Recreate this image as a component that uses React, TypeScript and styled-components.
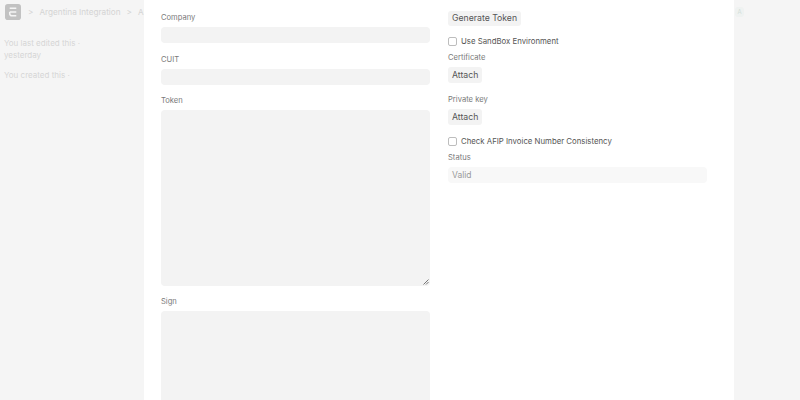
import styled, { createGlobalStyle } from 'styled-components'

const GlobalStyle = createGlobalStyle`
    html, body {
        margin: 0;
        padding: 0;
        height: 400px;
        overflow: hidden;
        background: #f5f5f5;
        font-family: Inter, "Liberation Sans", sans-serif;
    }
`

const App = () => {
    return (
        <Page>
            <GlobalStyle />
            <Backdrop>
                <TopBar>
                    <Logo>
                        <svg width="16" height="16" viewBox="0 0 17 17">
                            <rect width="17" height="17" rx="3" fill="#c2c2c2" />
                            <path d="M5 4.5h7M5 8.5h7M12 12.5H7.5Q5 12.5 5 10V8.5" fill="none" stroke="#f5f5f5" strokeWidth="1.6" />
                        </svg>
                    </Logo>
                    <Crumb>&gt;</Crumb>
                    <Crumb>Argentina Integration</Crumb>
                    <Crumb>&gt;</Crumb>
                    <Crumb>AFIP</Crumb>
                </TopBar>
                <SideNote>You last edited this ·<br />yesterday</SideNote>
                <SideNote>You created this ·</SideNote>
                <Avatar>A</Avatar>
            </Backdrop>
            <Modal>
                <Column>
                    <Field>
                        <Label>Company</Label>
                        <Input />
                    </Field>
                    <Field>
                        <Label>CUIT</Label>
                        <Input />
                    </Field>
                    <Field>
                        <Label>Token</Label>
                        <TextArea height={175.5}>
                            <svg width="6" height="6" viewBox="0 0 6 6">
                                <path d="M0.5 5.5L5.5 0.5M3 5.5L5.5 3" stroke="#777" strokeWidth="1" />
                            </svg>
                        </TextArea>
                    </Field>
                    <Field>
                        <Label>Sign</Label>
                        <TextArea height={176} />
                    </Field>
                </Column>
                <RightColumn>
                    <ActionButton>Generate Token</ActionButton>
                    <CheckRow top={10}>
                        <CheckBox />
                        Use SandBox Environment
                    </CheckRow>
                    <AttachField>
                        <Label>Certificate</Label>
                        <ActionButton tall>Attach</ActionButton>
                    </AttachField>
                    <AttachField>
                        <Label>Private key</Label>
                        <ActionButton tall>Attach</ActionButton>
                    </AttachField>
                    <CheckRow top={6}>
                        <CheckBox />
                        Check AFIP Invoice Number Consistency
                    </CheckRow>
                    <StatusField>
                        <Label>Status</Label>
                        <ReadOnly>Valid</ReadOnly>
                    </StatusField>
                </RightColumn>
            </Modal>
        </Page>
    )
}

const Page = styled.div`
    position: relative;
    width: 800px;
    height: 400px;
    overflow: hidden;
    background: #f5f5f5;
`

const Backdrop = styled.div`
    padding: 4px 0 0 5px;
    color: #d6d6d6;
    font-size: 8px;
    line-height: 12px;
`

const TopBar = styled.div`
    display: flex;
    align-items: center;
    gap: 6px;
    height: 16px;
    margin-bottom: 17px;
    font-size: 8.2px;
    color: #d4d4d4;
`

const Logo = styled.div`
    display: flex;
    margin-right: 1px;
`

const Crumb = styled.span`
    white-space: nowrap;
`

const SideNote = styled.div`
    margin-left: -1px;
    margin-bottom: 8px;
`

const Avatar = styled.div`
    position: absolute;
    top: 7px;
    left: 735px;
    width: 9px;
    height: 10px;
    border-radius: 3px;
    background: #eff2f1;
    color: #d3dfd9;
    font-size: 6px;
    line-height: 10px;
    text-align: center;
`

const Modal = styled.div`
    position: absolute;
    top: 0;
    left: 144px;
    display: grid;
    grid-template-columns: 269px 259px;
    column-gap: 18px;
    width: 590px;
    height: 400px;
    padding: 0 27px 0 17px;
    box-sizing: border-box;
    background: #fff;
    overflow: hidden;
`

const Column = styled.div`
    display: flex;
    flex-direction: column;
    padding-top: 12px;
`

const RightColumn = styled.div`
    display: flex;
    flex-direction: column;
    align-items: flex-start;
    padding-top: 11px;
`

const Field = styled.div`
    margin-bottom: 10.5px;
`

const Label = styled.div`
    height: 10px;
    margin-bottom: 5px;
    color: #7a7a7a;
    font-size: 7.6px;
    line-height: 12px;
`

const Input = styled.div`
    height: 16px;
    border-radius: 4px;
    background: #f3f3f3;
`

const TextArea = styled.div<{ height: number }>`
    display: flex;
    align-items: flex-end;
    justify-content: flex-end;
    height: ${({ height }) => height}px;
    padding: 1px;
    box-sizing: border-box;
    border-radius: 4px;
    background: #f3f3f3;
`

const ActionButton = styled.div<{ tall?: boolean }>`
    height: ${({ tall }) => (tall ? 16 : 15)}px;
    padding: 0 4px;
    border-radius: 3px;
    background: #f3f3f3;
    color: #555;
    font-size: 8.7px;
    line-height: ${({ tall }) => (tall ? 16 : 15)}px;
    white-space: nowrap;
`

const CheckRow = styled.label<{ top: number }>`
    display: flex;
    align-items: center;
    gap: 4px;
    height: 10px;
    margin-top: ${({ top }) => top}px;
    color: #555;
    font-size: 7.8px;
    white-space: nowrap;
`

const CheckBox = styled.span`
    width: 7px;
    height: 7px;
    border: 1px solid #bdbdbd;
    border-radius: 2px;
    background: #fff;
`

const AttachField = styled.div`
    display: flex;
    flex-direction: column;
    align-items: flex-start;
    margin: 6px 0 5px;
`

const StatusField = styled.div`
    align-self: stretch;
    margin-top: 6px;
`

const ReadOnly = styled.div`
    height: 16px;
    padding-left: 4px;
    border-radius: 4px;
    background: #f8f8f8;
    color: #9a9a9a;
    font-size: 8.5px;
    line-height: 16px;
`

export default App
